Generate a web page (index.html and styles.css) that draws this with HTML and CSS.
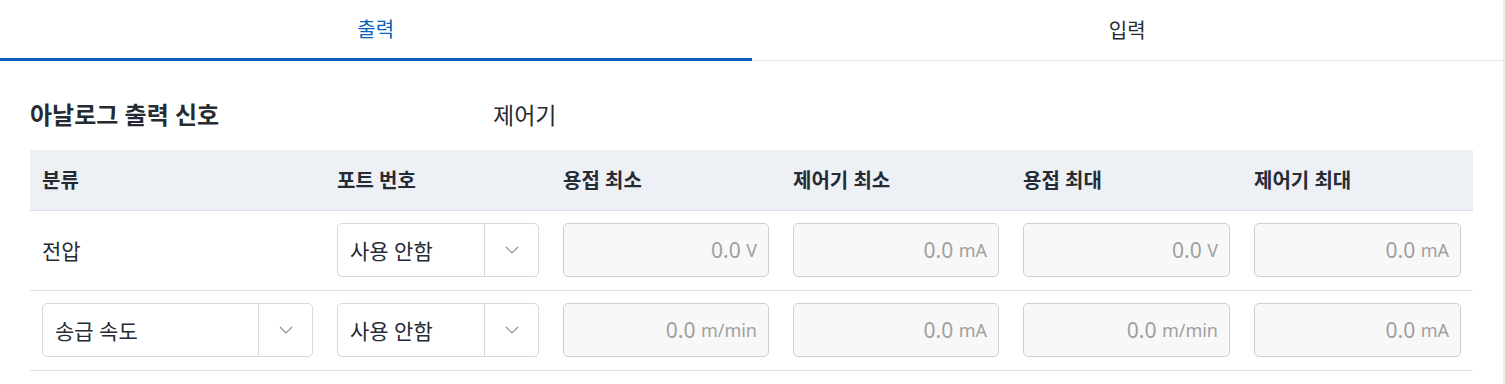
FILE: index.html
```html
<!DOCTYPE html>
<html lang="ko">
<head>
    <meta charset="UTF-8">
    <meta name="viewport" content="width=device-width, initial-scale=1.0">
    <title>아날로그 출력 신호</title>
    <link rel="stylesheet" href="styles.css">
</head>
<body>
    <div class="page">
        <div class="tabs">
            <div class="tab active">출력</div>
            <div class="tab">입력</div>
        </div>

        <div class="content">
            <div class="title-row">
                <h2>아날로그 출력 신호</h2>
                <span class="sub">제어기</span>
            </div>

            <table class="signals">
                <colgroup>
                    <col style="width: 295px">
                    <col style="width: 226px">
                    <col style="width: 230px">
                    <col style="width: 230px">
                    <col style="width: 231px">
                    <col style="width: 231px">
                </colgroup>
                <thead>
                    <tr>
                        <th>분류</th>
                        <th>포트 번호</th>
                        <th>용접 최소</th>
                        <th>제어기 최소</th>
                        <th>용접 최대</th>
                        <th>제어기 최대</th>
                    </tr>
                </thead>
                <tbody>
                    <tr>
                        <td class="label">전압</td>
                        <td>
                            <div class="select">
                                <span class="value">사용 안함</span>
                                <span class="arrow"><svg width="14" height="8" viewBox="0 0 14 8"><path d="M1 1l6 6 6-6" fill="none" stroke="#8a93a3" stroke-width="1.2"/></svg></span>
                            </div>
                        </td>
                        <td><div class="field">0.0 <small>V</small></div></td>
                        <td><div class="field">0.0 <small>mA</small></div></td>
                        <td><div class="field">0.0 <small>V</small></div></td>
                        <td><div class="field">0.0 <small>mA</small></div></td>
                    </tr>
                    <tr>
                        <td>
                            <div class="select">
                                <span class="value">송급 속도</span>
                                <span class="arrow"><svg width="14" height="8" viewBox="0 0 14 8"><path d="M1 1l6 6 6-6" fill="none" stroke="#8a93a3" stroke-width="1.2"/></svg></span>
                            </div>
                        </td>
                        <td>
                            <div class="select">
                                <span class="value">사용 안함</span>
                                <span class="arrow"><svg width="14" height="8" viewBox="0 0 14 8"><path d="M1 1l6 6 6-6" fill="none" stroke="#8a93a3" stroke-width="1.2"/></svg></span>
                            </div>
                        </td>
                        <td><div class="field">0.0 <small>m/min</small></div></td>
                        <td><div class="field">0.0 <small>mA</small></div></td>
                        <td><div class="field">0.0 <small>m/min</small></div></td>
                        <td><div class="field">0.0 <small>mA</small></div></td>
                    </tr>
                </tbody>
            </table>
        </div>
    </div>
</body>
</html>
```

FILE: styles.css
```css
* {
    margin: 0;
    padding: 0;
    box-sizing: border-box;
}

body {
    font-family: "Noto Sans", "Noto Sans CJK KR", sans-serif;
    background: #fff;
    color: #262b33;
}

.page {
    width: 1505px;
    height: 384px;
    border-right: 2px solid #ececf0;
}

.tabs {
    display: flex;
    height: 61px;
    border-bottom: 1px solid #e6e7ee;
}

.tab {
    flex: 1;
    display: flex;
    align-items: center;
    justify-content: center;
    font-size: 20px;
    color: #262b33;
    padding-bottom: 2px;
}

.tab.active {
    color: #0a5fb8;
    border-bottom: 3px solid #005ebd;
    margin-bottom: -1px;
}

.content {
    padding: 0 30px;
}

.title-row {
    display: flex;
    align-items: center;
    height: 89px;
    padding-top: 16px;
}

.title-row h2 {
    font-size: 24px;
    font-weight: 700;
    width: 463px;
    color: #262b33;
}

.title-row .sub {
    font-size: 23px;
    color: #262b33;
}

.signals {
    width: 1443px;
    border-collapse: collapse;
    table-layout: fixed;
}

.signals th {
    background: #edf0f5;
    height: 60px;
    text-align: left;
    font-size: 20px;
    font-weight: 700;
    padding: 0 12px;
    border-bottom: 1px solid #d8dce3;
}

.signals td {
    height: 80px;
    padding: 0 12px;
    border-bottom: 1px solid #dcdfe4;
    font-size: 21px;
}

.select {
    display: flex;
    height: 54px;
    border: 1px solid #d5d9e0;
    border-radius: 5px;
    background: #fff;
}

.select .value {
    flex: 1;
    display: flex;
    align-items: center;
    padding-left: 12px;
    font-size: 21px;
}

.select .arrow {
    width: 54px;
    display: flex;
    align-items: center;
    justify-content: center;
    border-left: 1px solid #d5d9e0;
}

.field {
    height: 54px;
    border: 1px solid #cfcfcf;
    border-radius: 5px;
    background: #f8f8f8;
    color: #a0a0a0;
    font-size: 21px;
    display: flex;
    align-items: center;
    justify-content: flex-end;
    padding-right: 11px;
    white-space: pre;
}

.field small {
    font-size: 18px;
}
```
